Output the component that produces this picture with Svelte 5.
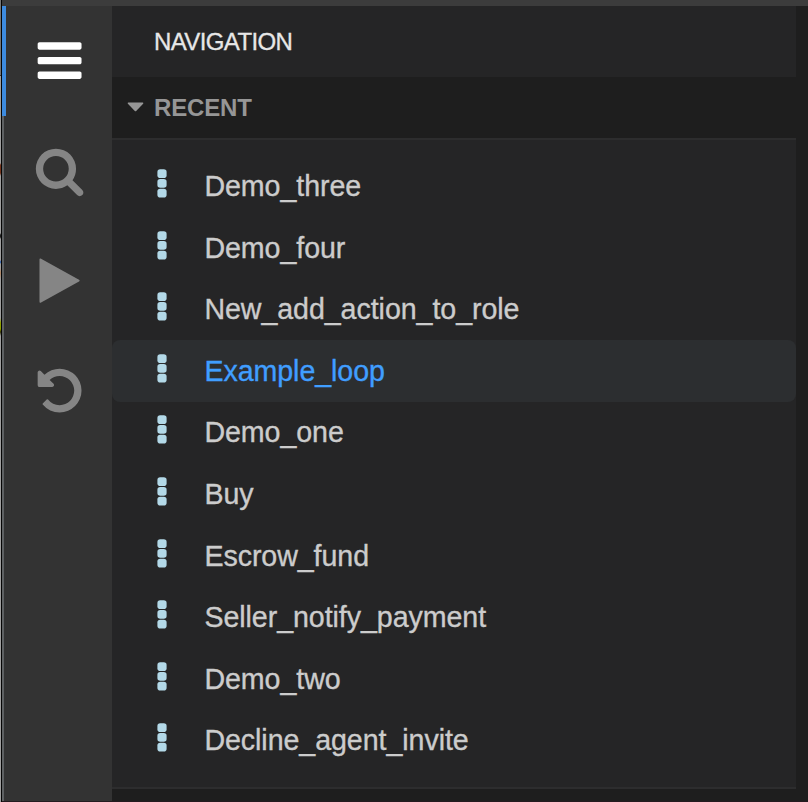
<script>
  const tools = [
    { name: 'menu', d: 'M1664 1344v128q0 26-19 45t-45 19h-1408q-26 0-45-19t-19-45v-128q0-26 19-45t45-19h1408q26 0 45 19t19 45zm0-512v128q0 26-19 45t-45 19h-1408q-26 0-45-19t-19-45v-128q0-26 19-45t45-19h1408q26 0 45 19t19 45zm0-512v128q0 26-19 45t-45 19h-1408q-26 0-45-19t-19-45v-128q0-26 19-45t45-19h1408q26 0 45 19t19 45z' },
    { name: 'search', d: 'M1216 832q0-185-131.5-316.5t-316.5-131.5-316.5 131.5-131.5 316.5 131.5 316.5 316.5 131.5 316.5-131.5 131.5-316.5zm512 832q0 52-38 90t-90 38q-54 0-90-38l-343-342q-179 124-399 124-143 0-273.5-55.5t-225-150-150-225-55.5-273.5 55.5-273.5 150-225 225-150 273.5-55.5 273.5 55.5 225 150 150 225 55.5 273.5q0 220-124 399l343 343q37 37 37 90z' },
    { name: 'run', d: 'M1576 927l-1328 738q-23 13-39.5 3t-16.5-36v-1472q0-26 16.5-36t39.5 3l1328 738q23 13 23 31t-23 31z' },
    { name: 'undo', d: 'M1664 896q0 156-61 298t-164 245-245 164-298 61q-172 0-327-72.5t-264-204.5q-7-10-6.5-22.5t8.5-20.5l137-138q10-9 25-9 16 2 23 12 73 95 179 147t225 52q104 0 198.5-40.5t163.5-109.5 109.5-163.5 40.5-198.5-40.5-198.5-109.5-163.5-163.5-109.5-198.5-40.5q-98 0-188 35.5t-160 101.5l137 138q31 30 14 69-17 40-59 40h-448q-26 0-45-19t-19-45v-448q0-42 40-59 39-17 69 14l130 129q107-101 244.5-156.5t284.5-55.5q156 0 298 61t245 164 164 245 61 298z' }
  ];
  const items = ['Demo_three', 'Demo_four', 'New_add_action_to_role', 'Example_loop', 'Demo_one', 'Buy', 'Escrow_fund', 'Seller_notify_payment', 'Demo_two', 'Decline_agent_invite'];
  let active = $state('menu');
  let selected = $state('Example_loop');
</script>

<div class="window">
  <div class="backdrop"></div>
  <div class="frame">
    <div class="titlebar"></div>
    <div class="body">
      <nav class="rail">
        {#each tools as tool}
          <button class="tool" class:active={active === tool.name} aria-label={tool.name} onclick={() => (active = tool.name)}>
            <svg viewBox="0 0 1792 1792"><path d={tool.d} /></svg>
          </button>
        {/each}
      </nav>
      <section class="panel">
        <header>NAVIGATION</header>
        <h2>
          <svg class="caret" viewBox="0 0 17 10"><path d="M1.2 0.5h14.6q1 .3.3 1.2L9.2 9q-.7.6-1.4 0L.9 1.7Q.2.8 1.2.5z" /></svg>
          <span>RECENT</span>
        </h2>
        <ul>
          {#each items as item}
            <li class:selected={selected === item}>
              <button onclick={() => (selected = item)}>
                <svg class="dots" viewBox="0 0 10 29">
                  <rect x="0.4" y="0.2" width="9.2" height="8.8" rx="2.8" />
                  <rect x="0.4" y="10" width="9.2" height="8.8" rx="2.8" />
                  <rect x="0.4" y="19.8" width="9.2" height="8.8" rx="2.8" />
                </svg>
                <span class="label">{item}</span>
              </button>
            </li>
          {/each}
        </ul>
        <footer></footer>
      </section>
      <div class="edge"></div>
    </div>
  </div>
</div>

<style>
  :global(body) { margin: 0; background: #1e1e1e; overflow: hidden; }
  .window {
    display: flex;
    width: 808px;
    height: 802px;
    font-family: 'Liberation Sans', Arial, sans-serif;
    color: #cccccc;
  }
  button { border: 0; background: none; padding: 0; font: inherit; color: inherit; }
  .backdrop {
    width: 1px;
    border-right: 1px solid #050505;
    background: linear-gradient(#747779 0 75px, #383838 75px 76px, #a0a0a0 76px 163px, #74341c 165px 173px, #a0a0a0 176px 233px, #202020 235px 237px, #a0a0a0 239px 260px, #245fb5 262px, #a0a0a0 264px 268px, #b38763 273px, #a0a0a0 279px 318px, #8fa000 323px 329px, #39380c 332px, #a0a0a0 336px);
  }
  .frame { flex: 1; display: flex; flex-direction: column; border-bottom: 1px solid #241b20; }
  .titlebar { height: 6px; background: #3c3c3c; }
  .body { flex: 1; display: flex; }
  .rail {
    width: 110px;
    display: flex;
    flex-direction: column;
    background: linear-gradient(90deg, #5e6163 2px, #333333 2px);
  }
  .tool {
    height: 110px;
    box-sizing: border-box;
    border-left: 4px solid transparent;
    padding-left: 0.2px;
    display: flex;
    align-items: center;
    justify-content: center;
    color: #858585;
  }
  .tool.active { border-left-color: #3d8bdf; color: #ffffff; }
  .tool svg { width: 51.2px; height: 51.2px; }
  svg { fill: currentColor; display: block; }
  .panel { width: 684px; display: flex; flex-direction: column; background: #252526; }
  header {
    height: 71px;
    line-height: 71px;
    padding-left: 42px;
    font-size: 24px;
    letter-spacing: -0.62px;
    -webkit-text-stroke: 0.3px currentColor;
    color: #e7e7e7;
  }
  h2 {
    margin: 0;
    height: 61px;
    display: flex;
    align-items: center;
    padding-left: 15px;
    gap: 10px;
    background: #1e1e1e;
    border-bottom: 2px solid #2d2d2e;
    font-size: 24px;
    letter-spacing: -0.15px;
    line-height: 61px;
    color: #969696;
  }
  .caret { width: 17px; height: 10px; margin-bottom: 2px; }
  ul {
    list-style: none;
    margin: 0;
    padding: 15.2px 0 15.8px;
    border-bottom: 2px solid #2d2d2e;
  }
  li { height: 61.6px; border-radius: 8px; }
  li button { width: 100%; height: 100%; display: flex; align-items: center; padding-left: 45px; text-align: left; }
  li.selected { background: #2c2e30; color: #409eff; }
  .dots { width: 10px; height: 29px; margin: 0 37.4px 5px 0; fill: #b3d9e8; }
  .label {
    font-size: 28.6px;
    letter-spacing: -0.06px;
    line-height: 59.6px;
    padding-top: 1.6px;
    -webkit-text-stroke: 0.35px currentColor;
  }
  footer { flex: 1; background: #1e1e1e; }
  .edge { flex: 1; background: #1e1e1e; }
</style>
